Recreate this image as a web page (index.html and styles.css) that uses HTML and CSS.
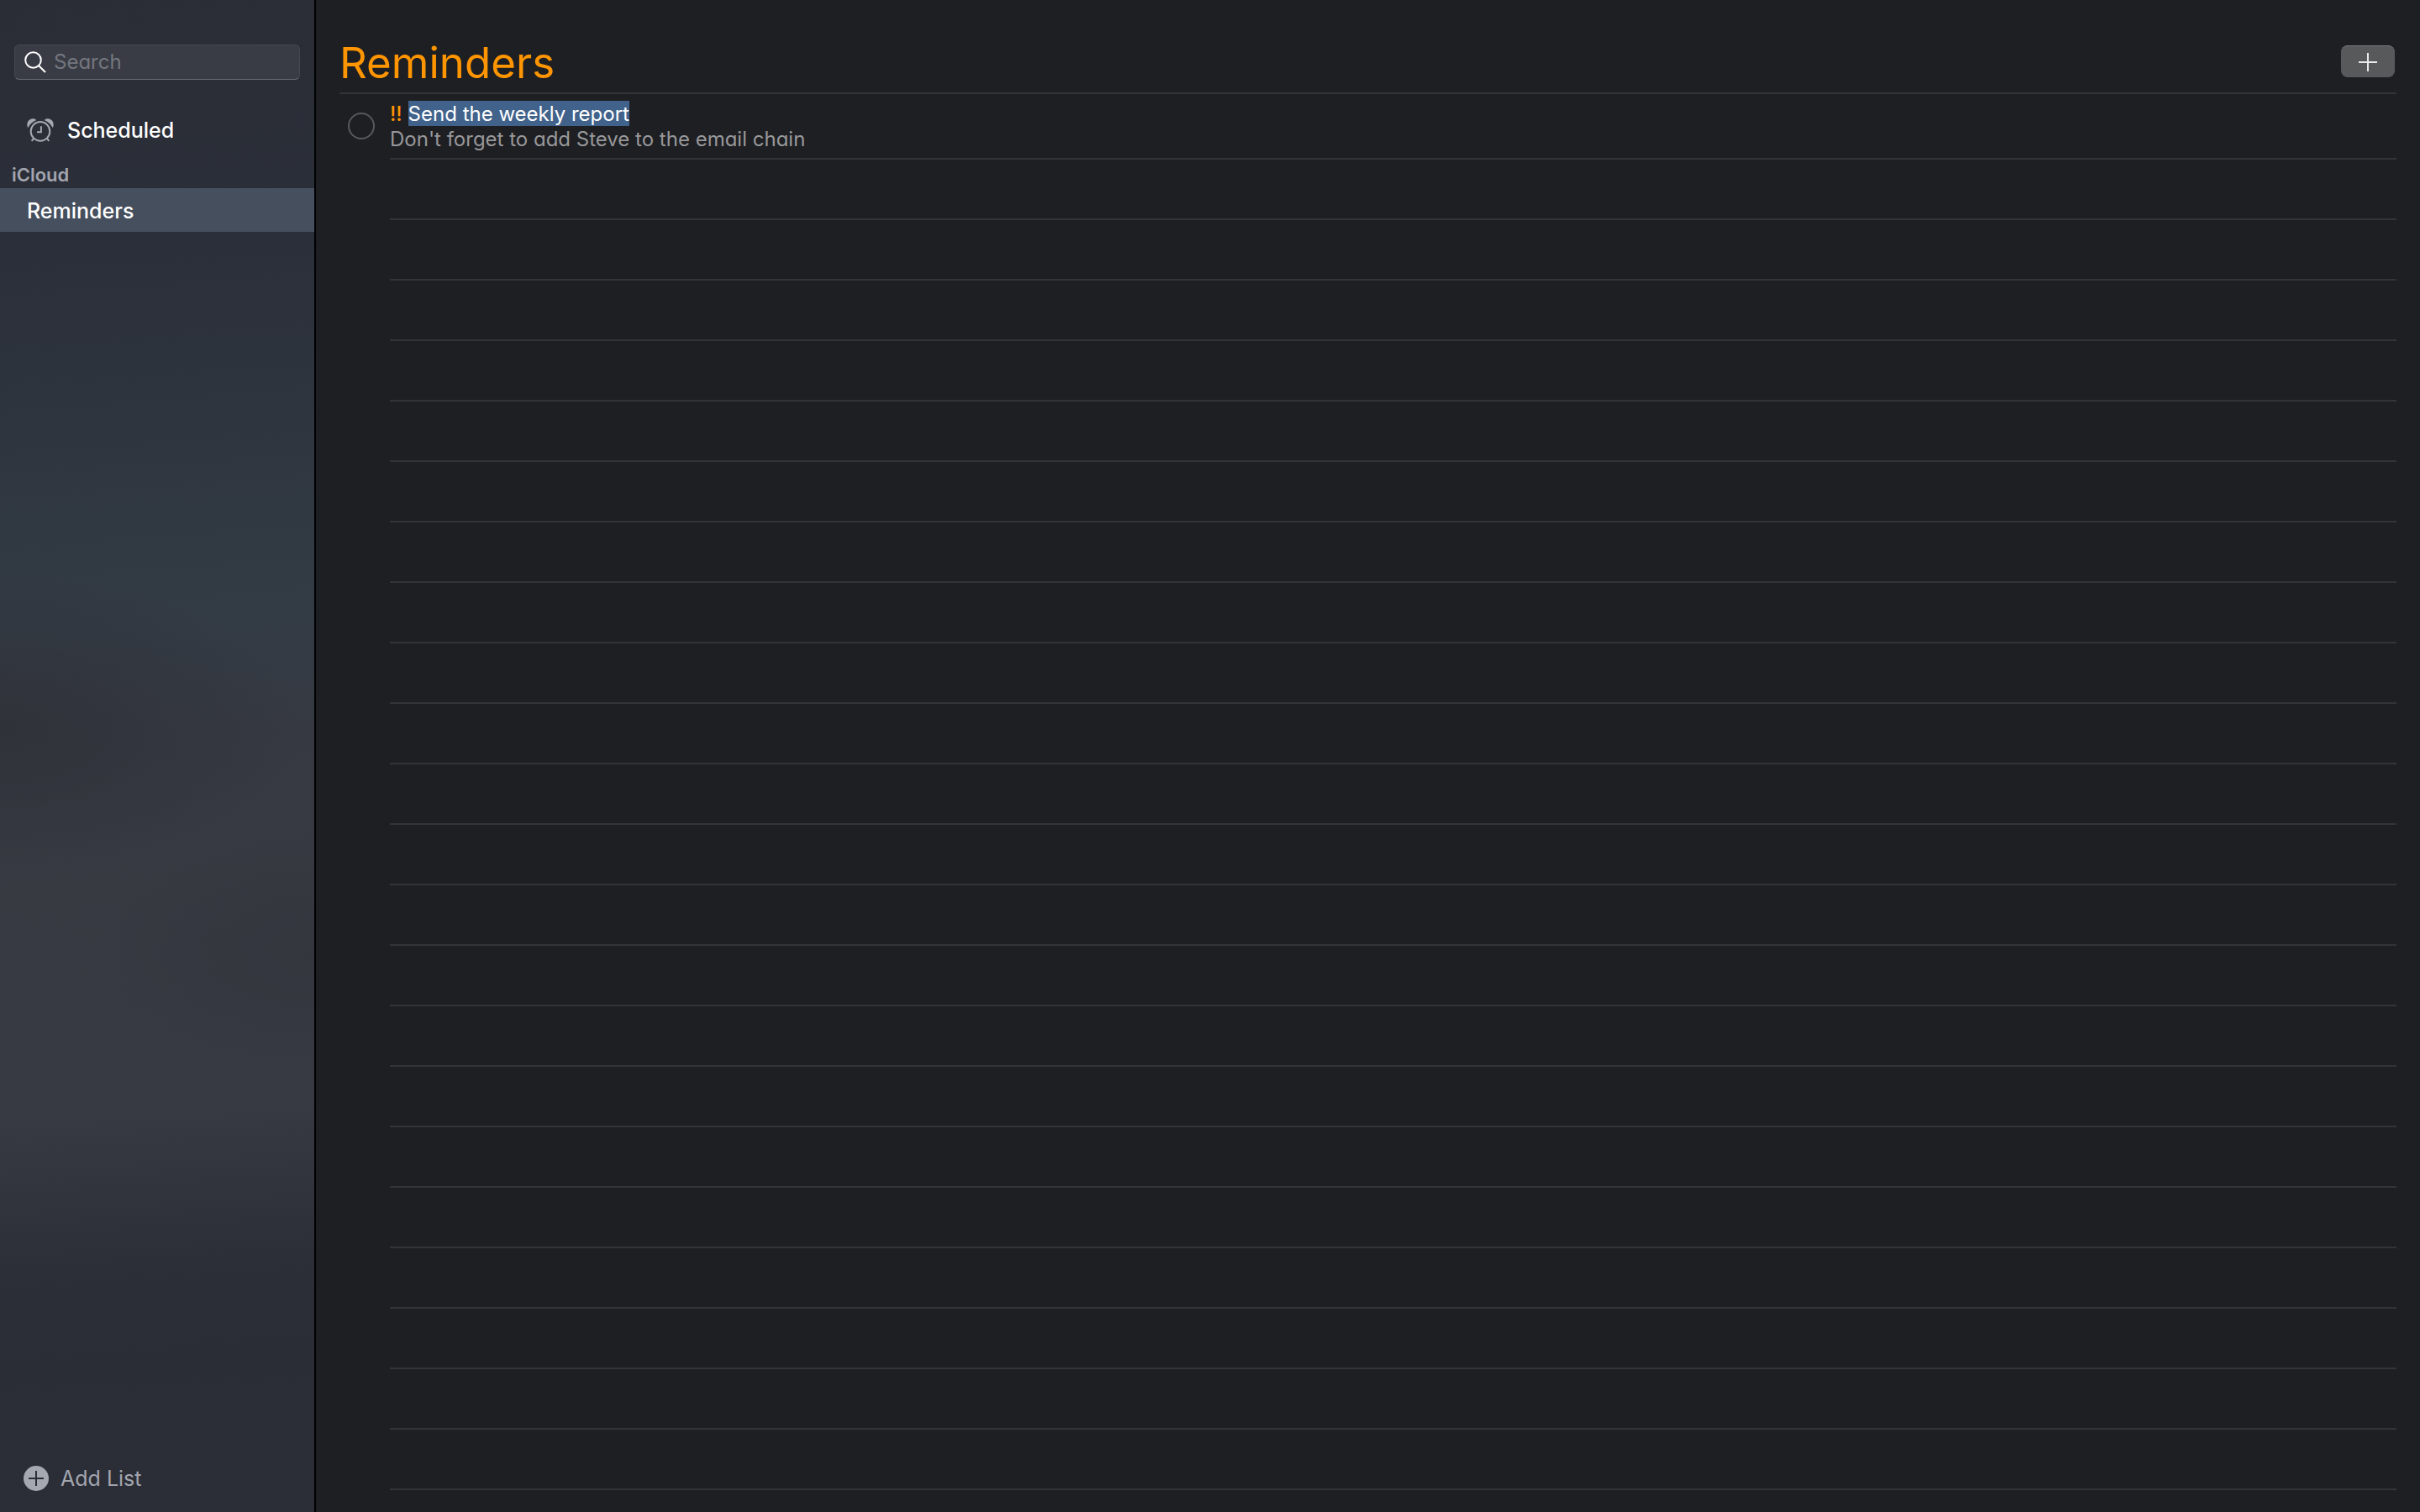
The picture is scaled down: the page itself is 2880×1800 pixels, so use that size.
FILE: index.html
```html
<!DOCTYPE html>
<html lang="en">
<head>
<meta charset="utf-8">
<title>Reminders</title>
<link rel="stylesheet" href="styles.css">
</head>
<body>
<div class="app">
  <aside class="sidebar">
    <label class="search">
      <svg class="search-icon" viewBox="0 0 26 26" aria-hidden="true"><circle cx="10.5" cy="10.5" r="9.3"/><path d="M17.2 17.2 25 25"/></svg>
      <input class="search-input" type="search" placeholder="Search" aria-label="Search">
    </label>
    <nav class="lists">
      <a class="list-link smart" href="#scheduled">
        <svg class="alarm-icon" viewBox="0 0 32 28" aria-hidden="true">
          <g class="bells"><path d="M1 10.8C-.6 6.500 .8 2.400 4.200.9 7-.2 9.600.5 11.300 2 7 3.600 3.600 6.600 1.800 10.600Z"/><path d="M31 10.800C32.600 6.500 31.200 2.400 27.800.9 25-.2 22.400.5 20.700 2 25 3.600 28.400 6.600 30.200 10.600Z"/></g>
          <circle cx="16" cy="15.400" r="11.300"/>
          <path d="M16.900 9.300V16.200H12M8.400 23.500 5.600 26.800M23.600 23.500 26.400 26.800"/>
        </svg>
        <span>Scheduled</span>
      </a>
      <h2 class="group">iCloud</h2>
      <a class="list-link selected" href="#reminders" aria-current="page"><span>Reminders</span></a>
    </nav>
    <button class="add-list" type="button">
      <svg class="add-icon" viewBox="0 0 30 30" aria-hidden="true"><circle cx="15" cy="15" r="15"/><path d="M15 6v18M6 15h18"/></svg>
      <span>Add List</span>
    </button>
  </aside>
  <main class="content">
    <header class="header">
      <h1 class="title">Reminders</h1>
      <button class="new" type="button" aria-label="New reminder">
        <svg class="new-icon" viewBox="0 0 22 22" aria-hidden="true"><path d="M11 0v22M0 11h22"/></svg>
      </button>
    </header>
    <ul class="items">
      <li class="item">
        <input class="check" type="checkbox" id="item-1">
        <div class="item-body">
          <label class="item-title" for="item-1"><span class="priority">!!</span><mark class="selection">Send the weekly report</mark></label>
          <p class="note">Don't forget to add Steve to the email chain</p>
        </div>
      </li>
    </ul>
    <div class="ruled"></div>
  </main>
</div>
</body>
</html>
```
FILE: styles.css
```css
* {
  box-sizing: border-box;
}

body {
  margin: 0;
  background: #1e1f23;
  color: #fff;
  font: 24px/30px Inter, "Liberation Sans", sans-serif;
  /* single-storey a */
  font-feature-settings: "cv11";
}

h1, h2, p, ul {
  margin: 0;
  padding: 0;
}

button, input {
  font: inherit;
  font-feature-settings: inherit;
  color: inherit;
}

.app {
  display: flex;
  min-height: 100vh;
}

/* Sidebar */
.sidebar {
  display: flex;
  flex-direction: column;
  flex: none;
  width: 376px;
  padding-top: 53px;
  border-right: 2px solid #000;
  background:
    radial-gradient(ellipse 360px 180px at 0% 48%, #303239 0%, #30323900 100%),
    radial-gradient(ellipse 300px 160px at 100% 63%, #34363e 0%, #34363e00 100%),
    linear-gradient(176deg, #2a2d36 0%, #2b2f39 17%, #303842 34%, #333b45 42%, #363942 49%, #383a42 58%, #373a42 73%, #2d2f38 83%, #2a2d36 89%, #2b2e37 100%);
}

.search {
  display: flex;
  align-items: center;
  gap: 9px;
  height: 42px;
  margin: 0 17px;
  padding: 0 11px;
  border: 1px solid #454851;
  border-bottom-color: #666972;
  border-radius: 6px;
  background: #393c45;
}

.search-icon {
  flex: none;
  width: 26px;
  height: 26px;
  fill: none;
  stroke: #fff;
  stroke-width: 2;
}

.search-input {
  flex: 1;
  min-width: 0;
  padding: 0;
  border: 0;
  outline: 0;
  background: none;
  appearance: none;
}

.search-input::placeholder {
  color: #74767e;
  opacity: 1;
}

.lists {
  margin-top: 33px;
}

.list-link {
  display: flex;
  align-items: center;
  height: 52px;
  padding: 2px 32px 0;
  color: #fff;
  font-size: 25px;
  font-weight: 500;
  text-decoration: none;
}

.smart {
  gap: 16px;
}

.selected {
  background: #464f5d;
}

.alarm-icon {
  width: 32px;
  height: 28px;
  fill: none;
  stroke: #a6a8b1;
  stroke-width: 2;
}

.bells {
  fill: #a6a8b1;
  stroke: none;
}

.group {
  height: 44px;
  padding: 14px 14px 0;
  color: #a3a5ae;
  font-size: 22px;
  font-weight: 600;
  line-height: 28px;
}

.add-list {
  display: flex;
  align-items: center;
  gap: 14px;
  margin-top: auto;
  padding: 25px 28px;
  border: 0;
  background: none;
  color: #a3a5ae;
  font-size: 25px;
}

.add-icon {
  width: 30px;
  height: 30px;
  fill: #a6a8b1;
  stroke: #2b2e37;
  stroke-width: 2;
}

.add-icon circle {
  stroke: none;
}

/* Reminder list */
.content {
  display: flex;
  flex-direction: column;
  flex: 1;
  padding: 0 28px;
}

.header {
  display: flex;
  align-items: center;
  justify-content: space-between;
  height: 112px;
  padding: 36px 2px 0 0;
  border-bottom: 2px solid #333438;
}

.title {
  padding-top: 4px;
  color: #ff9500;
  font-size: 51px;
  font-weight: 400;
  line-height: 60px;
}

.new {
  display: grid;
  place-items: center;
  width: 64px;
  height: 38px;
  padding: 0;
  border: 0;
  border-top: 1px solid #78797b;
  border-radius: 8px;
  background: #58595b;
}

.new-icon {
  width: 22px;
  height: 22px;
  stroke: #e8e8e9;
  stroke-width: 2;
}

.items {
  list-style: none;
}

.item {
  display: flex;
  gap: 18px;
  padding-left: 10px;
}

.check {
  flex: none;
  width: 32px;
  height: 32px;
  margin: 22px 0 0;
  border: 2px solid #58595c;
  border-radius: 50%;
  appearance: none;
}

.item-body {
  flex: 1;
  height: 78px;
  padding-top: 8px;
  border-bottom: 2px solid #333438;
}

.item-title {
  display: flex;
  gap: 7px;
  line-height: 28px;
}

.priority,
.selection {
  padding-top: 2px;
}

.priority {
  color: #ff9500;
  font-weight: 500;
}

.selection {
  background: #41628b;
  color: #fff;
}

.note {
  padding-top: 1px;
  color: #98989a;
}

.ruled {
  flex: 1;
  margin-left: 60px;
  background: repeating-linear-gradient(#1e1f23 0 70px, #333438 70px 72px);
}
```
